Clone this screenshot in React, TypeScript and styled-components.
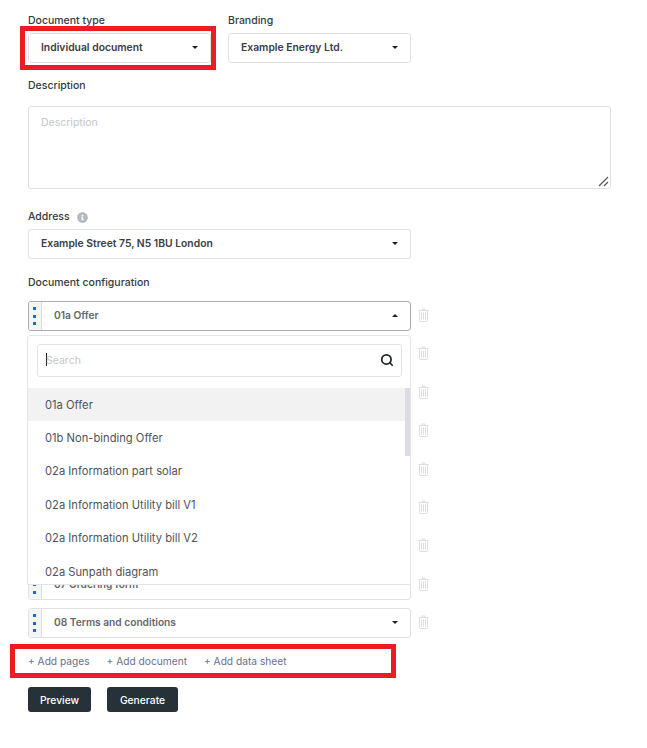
import React from 'react';
import styled, { createGlobalStyle } from 'styled-components';
import { Search } from 'lucide-react';
import { FaInfoCircle } from 'react-icons/fa';

const GlobalStyle = createGlobalStyle`
  html, body {
    margin: 0;
    background: #fff;
    font-family: Inter, "Open Sans", sans-serif;
    color: #2c3338;
  }
`;

const Page = styled.div`
  position: relative;
  width: 647px;
  height: 748px;
  padding: 14px 0 0 28px;
  box-sizing: border-box;
  overflow: hidden;
`;

const Columns = styled.div`
  display: flex;
  gap: 17px;
`;

const Field = styled.div<{ $width?: number; $top?: number }>`
  width: ${p => (p.$width ? `${p.$width}px` : 'auto')};
  margin-top: ${p => p.$top ?? 0}px;
`;

const Label = styled.div`
  display: flex;
  align-items: center;
  gap: 7px;
  height: 14px;
  font-size: 10.5px;
  line-height: 14px;
  font-weight: 500;
  color: #343b40;
`;

const InfoIcon = styled(FaInfoCircle)`
  width: 11px;
  height: 11px;
  color: #b4b8bb;
`;

const Select = styled.div`
  display: flex;
  align-items: center;
  justify-content: space-between;
  height: 30px;
  margin-top: 5px;
  padding: 0 12px 2px 12px;
  box-sizing: border-box;
  border: 1px solid #e2e3e5;
  border-radius: 3px;
  font-size: 10.35px;
  font-weight: 600;
  color: #3a4045;
`;

const Caret = styled.span<{ $up?: boolean }>`
  width: 0;
  height: 0;
  border-left: 3.5px solid transparent;
  border-right: 3.5px solid transparent;
  ${p => (p.$up ? 'border-bottom' : 'border-top')}: 3.5px solid #1b1f22;
`;

const TextArea = styled.div`
  position: relative;
  width: 583px;
  height: 83px;
  margin-top: 13px;
  padding: 10px 12px;
  box-sizing: border-box;
  border: 1px solid #dfe0e2;
  border-radius: 3px;
  font-size: 10.5px;
  line-height: 12px;
  color: #c4c6c8;
`;

const Grip = styled.svg`
  position: absolute;
  right: 1px;
  bottom: 1px;
  width: 12px;
  height: 12px;
`;

const RowList = styled.div`
  display: flex;
  flex-direction: column;
  gap: 8.375px;
  margin-top: 11px;
`;

const RowLine = styled.div`
  display: flex;
  align-items: center;
  gap: 7px;
`;

const Row = styled.div<{ $open?: boolean }>`
  display: flex;
  align-items: center;
  width: 383px;
  height: 30px;
  box-sizing: border-box;
  border: 1px solid ${p => (p.$open ? '#a9adb0' : '#e0e1e4')};
  border-radius: 3px;
  overflow: hidden;
`;

const Handle = styled.div`
  display: flex;
  flex-direction: column;
  align-items: center;
  justify-content: center;
  gap: 4.5px;
  flex: none;
  width: 13px;
  height: 100%;
  padding-right: 1px;
  box-sizing: border-box;
  background: #f3f5f8;
  border-right: 1px solid #dcdee2;
`;

const Dot = styled.span`
  display: block;
  width: 3px;
  height: 3px;
  background: #1f68d2;
`;

const RowBody = styled.div`
  display: flex;
  flex: 1;
  align-items: center;
  justify-content: space-between;
  padding: 0 12px 2px 12px;
  font-size: 10.2px;
  font-weight: 600;
  color: #63686c;
`;

const TrashIcon = styled.svg`
  flex: none;
  width: 11px;
  height: 14px;
  margin-bottom: 2px;
  color: #dcdde3;
`;

const Dropdown = styled.div`
  position: absolute;
  left: 27px;
  top: 335px;
  width: 384px;
  height: 250px;
  box-sizing: border-box;
  padding-top: 8px;
  background: #fff;
  border: 1px solid #e3e4e6;
  border-radius: 3px 3px 0 0;
  overflow: hidden;
`;

const SearchBox = styled.div`
  display: flex;
  align-items: center;
  justify-content: space-between;
  width: 365px;
  height: 33px;
  margin-left: 9px;
  padding: 0 7px 1px 8px;
  box-sizing: border-box;
  border: 1px solid #e2e3e5;
  border-radius: 3px;
  font-size: 10.5px;
  color: #c4c6c8;
`;

const Cursor = styled.span`
  display: inline-block;
  width: 1px;
  height: 13px;
  margin-right: -1px;
  background: #1a1a1a;
  vertical-align: -2px;
`;

const SearchIcon = styled(Search)`
  width: 14px;
  height: 14px;
  color: #23282c;
`;

const Options = styled.div`
  margin-top: 11px;
`;

const Option = styled.div<{ $active?: boolean }>`
  display: flex;
  align-items: center;
  height: 33.4px;
  padding-left: 17px;
  box-sizing: border-box;
  font-size: 11.2px;
  color: #4f5458;
  background: ${p => (p.$active ? '#f2f2f2' : '#fff')};
`;

const ScrollThumb = styled.div`
  position: absolute;
  right: 0;
  top: 52px;
  width: 5px;
  height: 68px;
  background: #dcdde0;
`;

const Links = styled.div`
  display: flex;
  gap: 17px;
  margin-top: 16px;
  height: 14px;
  font-size: 10.2px;
  line-height: 14px;
  color: #6b6f8c;
`;

const Buttons = styled.div`
  display: flex;
  gap: 16px;
  margin-top: 19px;
`;

const Button = styled.div<{ $width: number }>`
  display: flex;
  align-items: center;
  justify-content: center;
  width: ${p => p.$width}px;
  height: 25px;
  border-radius: 3px;
  background: #263238;
  color: #fff;
  font-size: 10.3px;
  font-weight: 500;
`;

const Highlight = styled.div<{ $x: number; $y: number; $w: number; $h: number }>`
  position: absolute;
  left: ${p => p.$x}px;
  top: ${p => p.$y}px;
  width: ${p => p.$w}px;
  height: ${p => p.$h}px;
  box-sizing: border-box;
  border: 5px solid #ec1c24;
`;

// rows behind the open dropdown have no readable name in the picture
const rows = ['01a Offer', '', '', '', '', '', '', '07 Ordering form', '08 Terms and conditions'];

const options = [
  '01a Offer',
  '01b Non-binding Offer',
  '02a Information part solar',
  '02a Information Utility bill V1',
  '02a Information Utility bill V2',
  '02a Sunpath diagram',
];

const Trash = () => (
  <TrashIcon viewBox="0 0 11 14" fill="none" stroke="currentColor">
    <path d="M0.5 2.5h10M4 2.5V1h3v1.5" />
    <path d="M1.5 2.5v10.2q0 .8.8.8h6.4q.8 0 .8-.8V2.5" />
    <path d="M3.5 4.5v7M5.5 4.5v7M7.5 4.5v7" />
  </TrashIcon>
);

export default function App() {
  return (
    <Page>
      <GlobalStyle />
      <Columns>
        <Field $width={183}>
          <Label>Document type</Label>
          <Select>
            Individual document
            <Caret />
          </Select>
        </Field>
        <Field $width={183}>
          <Label>Branding</Label>
          <Select>
            Example Energy Ltd.
            <Caret />
          </Select>
        </Field>
      </Columns>
      <Field $top={16}>
        <Label>Description</Label>
        <TextArea>
          Description
          <Grip viewBox="0 0 12 12" stroke="#555" strokeWidth="1.2">
            <path d="M2 11 L11 2M7 11 L11 7" />
          </Grip>
        </TextArea>
      </Field>
      <Field $top={21} $width={383}>
        <Label>
          Address
          <InfoIcon />
        </Label>
        <Select>
          Example Street 75, N5 1BU London
          <Caret />
        </Select>
      </Field>
      <Field $top={17}>
        <Label>Document configuration</Label>
        <RowList>
          {rows.map((name, i) => (
            <RowLine key={i}>
              <Row $open={i === 0}>
                <Handle>
                  <Dot />
                  <Dot />
                  <Dot />
                </Handle>
                <RowBody>
                  <span>{name}</span>
                  <Caret $up={i === 0} />
                </RowBody>
              </Row>
              <Trash />
            </RowLine>
          ))}
        </RowList>
      </Field>
      <Links>
        <span>+ Add pages</span>
        <span>+ Add document</span>
        <span>+ Add data sheet</span>
      </Links>
      <Buttons>
        <Button $width={63}>Preview</Button>
        <Button $width={71}>Generate</Button>
      </Buttons>

      <Dropdown>
        <SearchBox>
          <span>
            <Cursor />
            Search
          </span>
          <SearchIcon strokeWidth={3} />
        </SearchBox>
        <Options>
          {options.map((name, i) => (
            <Option key={name} $active={i === 0}>
              {name}
            </Option>
          ))}
        </Options>
        <ScrollThumb />
      </Dropdown>

      <Highlight $x={20} $y={26} $w={196} $h={44} />
      <Highlight $x={10} $y={644} $w={386} $h={34} />
    </Page>
  );
}
